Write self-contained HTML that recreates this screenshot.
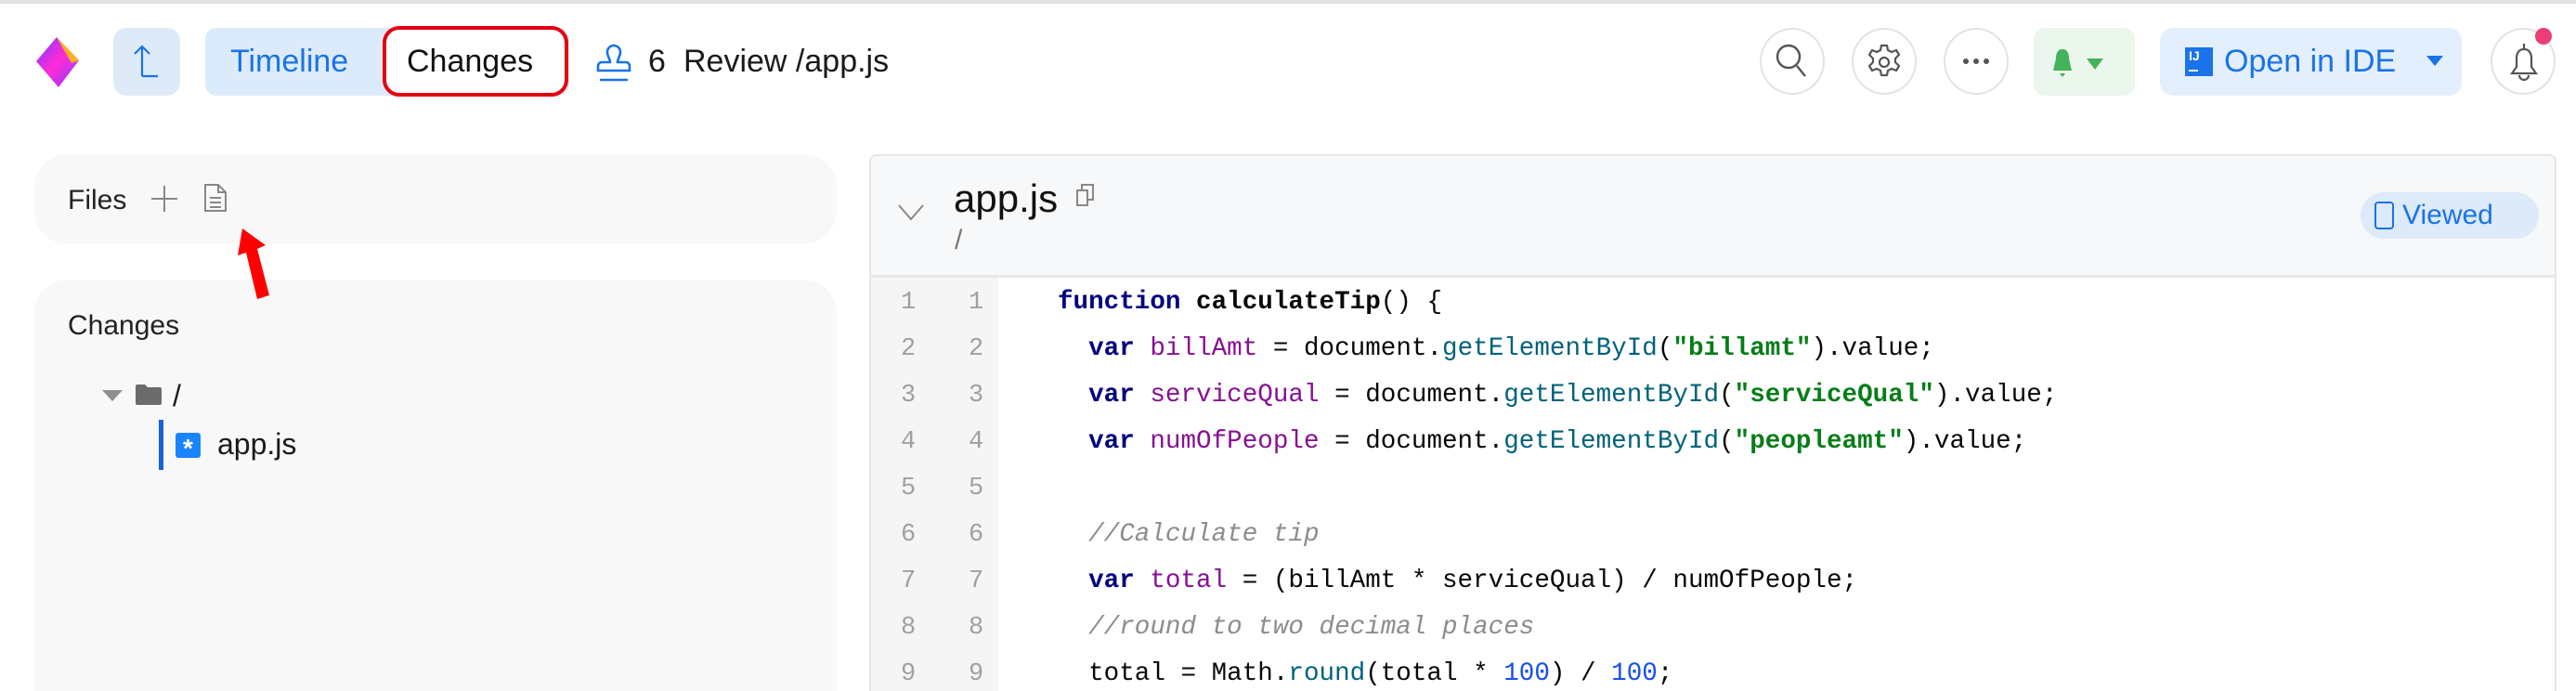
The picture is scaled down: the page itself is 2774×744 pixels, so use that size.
<!DOCTYPE html>
<html><head><meta charset="utf-8"><style>
*{margin:0;padding:0;box-sizing:border-box}
html,body{width:2774px;height:744px;overflow:hidden}
body{background:#fff;font-family:"Liberation Sans",sans-serif;position:relative;color:#1a1a1a}
.a{position:absolute}
.circ{position:absolute;top:30px;width:70px;height:72px;border:2px solid #e3e3e3;border-radius:50%;background:#fff}
.code{position:absolute;left:1139px;font-family:"Liberation Mono",monospace;font-size:27.6px;white-space:pre;color:#080808;line-height:50px}
.ln{position:absolute;font-family:"Liberation Mono",monospace;font-size:27px;color:#a0a0a0;line-height:50px}
.k{color:#000080;font-weight:bold}.v{color:#871094}.m{color:#00627a}.s{color:#067d17;font-weight:bold}.n{color:#1750eb}.c{color:#8c8c8c;font-style:italic}
</style></head><body>
<div class="a" style="left:0;top:0;width:2774px;height:4px;background:#e2e2e2"></div>
<svg class="a" style="left:37px;top:38px" width="52" height="58" viewBox="0 0 52 58"><defs><linearGradient id="g" x1="0" y1="0" x2="1" y2="1"><stop offset="0" stop-color="#7b3cff"/><stop offset=".5" stop-color="#ff2bd6"/><stop offset="1" stop-color="#8a3cff"/></linearGradient></defs><path d="M24 2 L48 27 L26 56 L2 28 Z" fill="url(#g)"/><path d="M24 2 L48 27 L40 30 Z" fill="#ffb020"/></svg>
<div class="a" style="left:122px;top:30px;width:72px;height:73px;background:#dfeaf9;border-radius:14px"></div>
<svg class="a" style="left:140px;top:46px" width="36" height="40" viewBox="0 0 36 40"><path d="M13 36 V4 M5 12 L13 4 L21 12 M13 36 H30" stroke="#1a73e8" stroke-width="2.2" fill="none"/></svg>
<div class="a" style="left:221px;top:30px;width:392px;height:73px;background:#dcebfb;border-radius:12px"></div>
<div class="a" style="left:248px;top:47px;font-size:34px;color:#1a73e8">Timeline</div>
<div class="a" style="left:412px;top:28px;width:200px;height:76px;background:#fff;border:4px solid #e40010;border-radius:18px"></div>
<div class="a" style="left:438px;top:47px;font-size:34px;color:#111">Changes</div>
<svg class="a" style="left:640px;top:46px" width="42" height="44" viewBox="0 0 42 44"><path d="M21 3 a7 7 0 0 1 7 7 c0 5-3 7-3 11 h9 a4 4 0 0 1 4 4 v5 H4 v-5 a4 4 0 0 1 4-4 h9 c0-4-3-6-3-11 a7 7 0 0 1 7-7z M6 40 H36" stroke="#1a73e8" stroke-width="2.6" fill="none"/></svg>
<div class="a" style="left:698px;top:47px;font-size:34px">6</div>
<div class="a" style="left:736px;top:47px;font-size:34px">Review /app.js</div>
<div class="circ" style="left:1895px"></div>
<svg class="a" style="left:1910px;top:45px" width="40" height="42" viewBox="0 0 40 42"><circle cx="16" cy="16" r="12" stroke="#555" stroke-width="2.4" fill="none"/><path d="M25 26 L34 37" stroke="#555" stroke-width="2.4"/></svg>
<div class="circ" style="left:1994px"></div>
<svg class="a" style="left:2009px;top:46px" width="40" height="42" viewBox="0 0 40 42"><path d="M17 3h6l1 5 4 2 5-2 3 5-4 4v4l4 4-3 5-5-2-4 2-1 5h-6l-1-5-4-2-5 2-3-5 4-4v-4l-4-4 3-5 5 2 4-2z" stroke="#555" stroke-width="2.2" fill="none" stroke-linejoin="round"/><circle cx="20" cy="21" r="5" stroke="#555" stroke-width="2.2" fill="none"/></svg>
<div class="circ" style="left:2093px"></div>
<div class="a" style="left:2114px;top:63px;width:6px;height:6px;border-radius:3px;background:#555;box-shadow:11px 0 #555,22px 0 #555"></div>
<div class="a" style="left:2190px;top:30px;width:109px;height:73px;background:#ebf6ec;border-radius:12px"></div>
<svg class="a" style="left:2210px;top:52px" width="70" height="32" viewBox="0 0 70 32"><path d="M11 1 c5 0 7 4 7 10 l3 13 H1 l3-13 c0-6 2-10 7-10z" fill="#44b25a"/><path d="M8 27 h6 l-3 4z" fill="#44b25a"/><path d="M37 11 h18 l-9 12z" fill="#44b25a"/></svg>
<div class="a" style="left:2326px;top:30px;width:325px;height:73px;background:#e3effd;border-radius:14px"></div>
<div class="a" style="left:2353px;top:51px;width:30px;height:31px;background:#1a73e8;color:#fff;font-size:14px;font-weight:bold;padding:2px 0 0 4px;line-height:14px">IJ<div style="width:10px;height:2px;background:#fff;margin-top:8px"></div></div>
<div class="a" style="left:2395px;top:47px;font-size:34px;color:#1a73e8">Open in IDE</div>
<svg class="a" style="left:2612px;top:58px" width="20" height="16"><path d="M1 2h18l-9 11z" fill="#1a73e8"/></svg>
<div class="circ" style="left:2682px"></div>
<svg class="a" style="left:2700px;top:46px" width="36" height="44" viewBox="0 0 36 44"><path d="M18 1v6 M18 7c-6 0-8 5-8 10v9l-5 7h26l-5-7v-9c0-5-2-10-8-10z M13 35a5 5 0 0 0 10 0" stroke="#555" stroke-width="2.2" fill="none"/></svg>
<div class="a" style="left:2730px;top:30px;width:18px;height:18px;border-radius:50%;background:#ec3d74"></div>
<div class="a" style="left:37px;top:166px;width:864px;height:97px;background:#f8f8f8;border-radius:36px"></div>
<div class="a" style="left:73px;top:199px;font-size:30px;color:#222">Files</div>
<svg class="a" style="left:162px;top:199px" width="30" height="30"><path d="M15 1v28M1 15h28" stroke="#888" stroke-width="2"/></svg>
<svg class="a" style="left:219px;top:197px" width="26" height="32" viewBox="0 0 26 32"><path d="M2 2h14l8 8v20H2z M16 2v8h8 M7 16h12M7 21h12M7 26h12" stroke="#888" stroke-width="2" fill="none"/></svg>
<div class="a" style="left:37px;top:301px;width:864px;height:443px;background:#f8f8f8;border-radius:36px 36px 0 0"></div>
<svg class="a" style="left:250px;top:244px" width="50" height="80" viewBox="0 0 50 80"><path d="M11 2 L36 20 L27 24 L40 74 L27 78 L15 28 L6 31 Z" fill="#f00"/></svg>
<div class="a" style="left:73px;top:334px;font-size:30px;color:#222">Changes</div>
<svg class="a" style="left:109px;top:419px" width="24" height="14"><path d="M1 1h22l-11 12z" fill="#8d8f94"/></svg>
<svg class="a" style="left:146px;top:414px" width="28" height="22"><path d="M0 2a2 2 0 0 1 2-2h8l3 3h13a2 2 0 0 1 2 2v15a2 2 0 0 1-2 2H2a2 2 0 0 1-2-2z" fill="#6b6b6b"/></svg>
<div class="a" style="left:186px;top:408px;font-size:32px">/</div>
<div class="a" style="left:171px;top:452px;width:5px;height:54px;background:#1a63d6"></div>
<div class="a" style="left:189px;top:466px;width:27px;height:27px;background:#1a84ff;border-radius:3px;color:#fff;font-size:28px;line-height:34px;text-align:center;font-weight:bold">*</div>
<div class="a" style="left:234px;top:460px;font-size:32px">app.js</div>
<div class="a" style="left:936px;top:166px;width:1817px;height:578px;border:2px solid #e4e6e8;border-bottom:none;border-radius:8px 8px 0 0;background:#fff;overflow:hidden">
<div style="position:absolute;left:0;top:0;width:100%;height:131px;background:#f7f8f9;border-bottom:3px solid #e6e8ea"></div>
<div style="position:absolute;left:0;top:131px;width:137px;height:450px;background:#f5f5f5"></div>
</div>
<svg class="a" style="left:966px;top:218px" width="30" height="22"><path d="M2 3l13 15 13-15" stroke="#888" stroke-width="2" fill="none"/></svg>
<div class="a" style="left:1027px;top:190px;font-size:42px;color:#111">app.js</div>
<svg class="a" style="left:1157px;top:196px" width="24" height="28" viewBox="0 0 24 28"><path d="M3 9h11v16H3z M8 9V3h12v16h-6" stroke="#888" stroke-width="2" fill="none"/></svg>
<div class="a" style="left:1028px;top:242px;font-size:30px;color:#777">/</div>
<div class="a" style="left:2542px;top:207px;width:192px;height:50px;background:#dceafa;border-radius:25px"></div>
<div class="a" style="left:2557px;top:217px;width:21px;height:30px;border:2.5px solid #1a73e8;border-radius:4px"></div>
<div class="a" style="left:2587px;top:215px;font-size:30px;color:#1a73e8">Viewed</div>
<div class="ln" style="left:970px;top:301px">1<br>2<br>3<br>4<br>5<br>6<br>7<br>8<br>9</div>
<div class="ln" style="left:1043px;top:301px">1<br>2<br>3<br>4<br>5<br>6<br>7<br>8<br>9</div>
<div class="code" style="top:301px;height:443px;overflow:hidden"><span class="k">function</span> <b>calculateTip</b>() {
  <span class="k">var</span> <span class="v">billAmt</span> = document.<span class="m">getElementById</span>(<span class="s">"billamt"</span>).value;
  <span class="k">var</span> <span class="v">serviceQual</span> = document.<span class="m">getElementById</span>(<span class="s">"serviceQual"</span>).value;
  <span class="k">var</span> <span class="v">numOfPeople</span> = document.<span class="m">getElementById</span>(<span class="s">"peopleamt"</span>).value;

  <span class="c">//Calculate tip</span>
  <span class="k">var</span> <span class="v">total</span> = (billAmt * serviceQual) / numOfPeople;
  <span class="c">//round to two decimal places</span>
  total = Math.<span class="m">round</span>(total * <span class="n">100</span>) / <span class="n">100</span>;</div>
</body></html>
